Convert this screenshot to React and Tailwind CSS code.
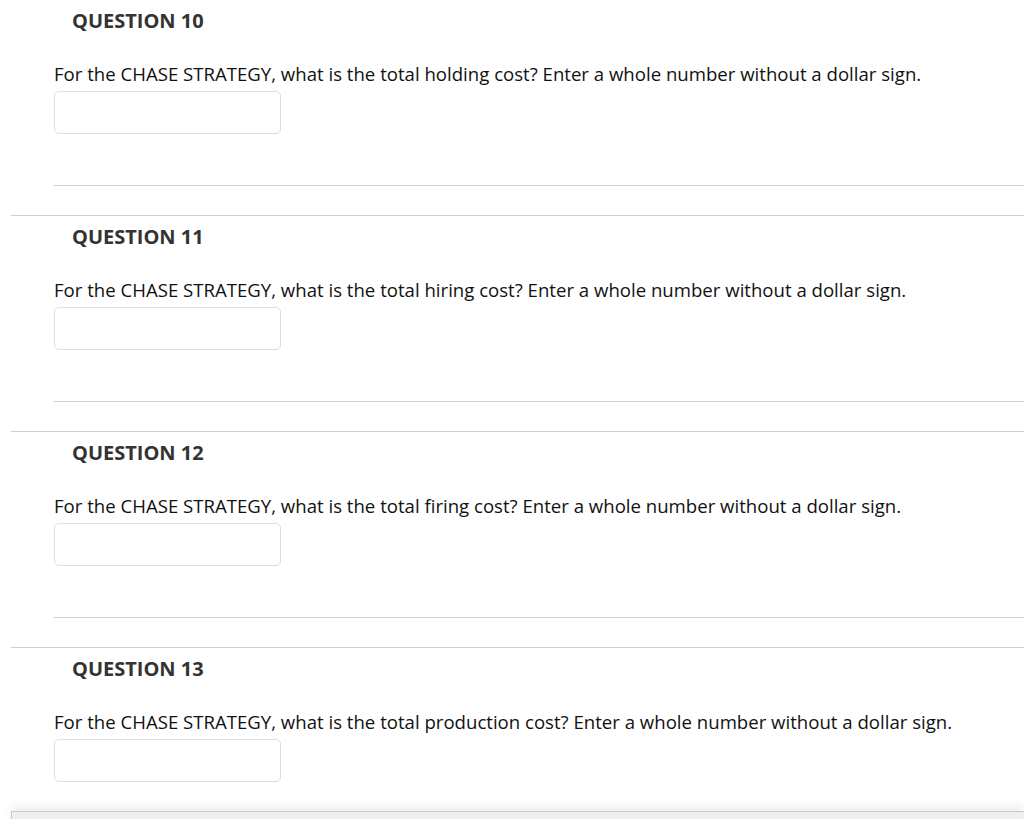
import React from "react";

const questions = [
  { n: 10, kind: "holding" },
  { n: 11, kind: "hiring" },
  { n: 12, kind: "firing" },
  { n: 13, kind: "production" },
];

function Section({ n, kind, last }) {
  return (
    <div className={last ? "ml-[11px]" : "ml-[11px] border-b border-[#cfcfcf]"}>
      <div className="pl-[61px] pt-[9px] h-[33px] text-[20px] leading-[24px] font-bold text-[#333333]">
        QUESTION {n}
      </div>
      <div className="pl-[43px] mt-[29px] text-[18.6px] leading-[24px] text-[#111111] whitespace-nowrap">
        For the CHASE STRATEGY, what is the total {kind} cost? Enter a whole number without a dollar sign.
      </div>
      <div className="pl-[43px] mt-[5px]">
        <div className="w-[227px] h-[43px] rounded-[5px] border border-[#dedede] bg-white" />
      </div>
      {!last && (
        <div className="ml-[43px] mt-[51px] mb-[29px] border-t border-[#cfcfcf]" />
      )}
      {last && (
        <div className="mt-[29px] h-[20px] border-t border-l border-[#c8c8c8] bg-[#efefef] shadow-[0_-6px_10px_rgba(0,0,0,0.06)]" />
      )}
    </div>
  );
}

export default function App() {
  return (
    <div
      className="w-[1024px] h-[819px] overflow-hidden bg-white"
      style={{ fontFamily: '"Open Sans", "Noto Sans", sans-serif' }}
    >
      {questions.map((q, i) => (
        <Section key={q.n} n={q.n} kind={q.kind} last={i === questions.length - 1} />
      ))}
    </div>
  );
}
